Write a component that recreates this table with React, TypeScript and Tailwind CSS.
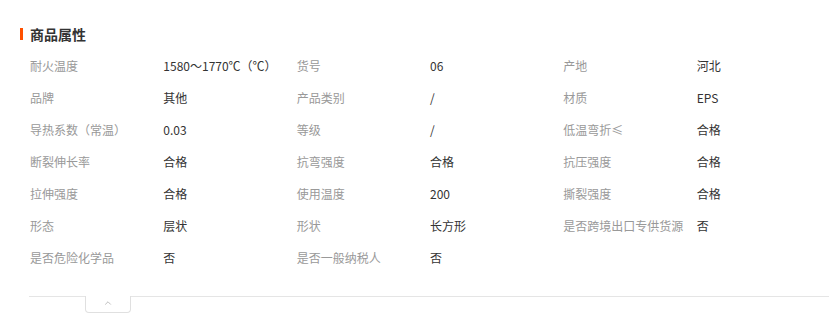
import { ChevronUp } from "lucide-react";

const attrs: [string, string][] = [
  ["耐火温度", "1580～1770℃（℃）"],
  ["货号", "06"],
  ["产地", "河北"],
  ["品牌", "其他"],
  ["产品类别", "/"],
  ["材质", "EPS"],
  ["导热系数（常温）", "0.03"],
  ["等级", "/"],
  ["低温弯折≤", "合格"],
  ["断裂伸长率", "合格"],
  ["抗弯强度", "合格"],
  ["抗压强度", "合格"],
  ["拉伸强度", "合格"],
  ["使用温度", "200"],
  ["撕裂强度", "合格"],
  ["形态", "层状"],
  ["形状", "长方形"],
  ["是否跨境出口专供货源", "否"],
  ["是否危险化学品", "否"],
  ["是否一般纳税人", "否"],
];

export default function App() {
  return (
    <div
      className="w-[840px] h-[334px] bg-white pt-[25px]"
      style={{ fontFamily: '"Noto Sans CJK SC", "Noto Sans", sans-serif' }}
    >
      {/* Title */}
      <div className="flex items-center h-[18px] pl-[20px]">
        <span className="w-[3px] h-[12px] bg-[#ff5000]" />
        <h2 className="ml-[7px] text-[14px] font-bold text-[#333] leading-[18px]">商品属性</h2>
      </div>

      {/* Attribute grid */}
      <div className="ml-[30px] w-[800px] mt-[7px] grid grid-cols-6 text-[12px]">
        {attrs.map(([label, value]) => (
          <div key={label} className="col-span-2 grid grid-cols-2 h-[32px] items-center">
            <span className="text-[#999] whitespace-nowrap">{label}</span>
            <span className="text-[#333] whitespace-nowrap">{value}</span>
          </div>
        ))}
      </div>

      {/* Collapse footer */}
      <div className="ml-[29px] w-[800px] mt-[22px] border-t border-[#e5e5e5]">
        <button className="ml-[56px] w-[46px] h-[17px] -mt-px border border-t-0 border-[#e0e0e0] rounded-b-[4px] flex items-start justify-center bg-white">
          <ChevronUp size={10} strokeWidth={1.5} className="text-[#999] mt-[2px]" />
        </button>
      </div>
    </div>
  );
}
